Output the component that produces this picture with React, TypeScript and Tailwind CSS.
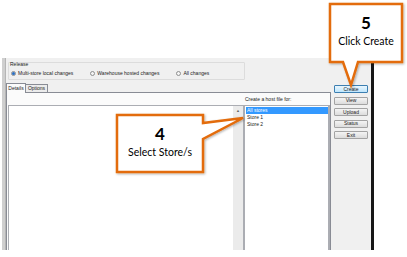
import React from "react";

const orange = "#e36c0a";

function Radio({ checked, label }: { checked?: boolean; label: string }) {
    return (
        <div className="flex items-center gap-[2px]">
            <span className="flex h-[5px] w-[5px] items-center justify-center rounded-full border border-[#8e8f8f] bg-[#f4f4f4]">
                {checked && <span className="h-[3px] w-[3px] rounded-full bg-[#2a6fc4]" />}
            </span>
            <span>{label}</span>
        </div>
    );
}

function Button({ label, primary }: { label: string; primary?: boolean }) {
    return (
        <div
            className={
                primary
                    ? "flex h-[8px] w-[34px] items-center justify-center rounded-[1px] border border-[#3c7fb1] bg-gradient-to-b from-[#eaf6fd] to-[#bee6fd] leading-none"
                    : "flex h-[8px] w-[34px] items-center justify-center rounded-[1px] border border-[#a3a3a3] bg-gradient-to-b from-[#f4f4f4] to-[#dcdcdc] leading-none"
            }
        >
            {label}
        </div>
    );
}

export default function App() {
    const buttons = ["Create", "View", "Upload", "Status", "Exit"];

    return (
        <div className="relative h-[257px] w-[407px] overflow-hidden bg-white text-[5px] text-[#222] [font-family:'Liberation_Sans',sans-serif]">
            <div className="pl-[2px] pt-[58px]">
                {/* Window */}
                <div className="flex h-[192px] w-[372px] border-l-[3px] border-r-[3px] border-l-[#cfcfcf] border-r-[#161616] bg-[#f0f0f0]">
                    {/* Left column */}
                    <div className="flex w-[326px] flex-col border-l border-[#b5b5b5]">
                        <div className="relative ml-[2px] mt-[4px] h-[18px] w-[237px] rounded-[1px] border border-[#dcdcdc]">
                            <span className="absolute left-[1px] top-[-1px] leading-none">Release</span>
                            <div className="flex gap-[17px] pl-[2px] pt-[8px] leading-none">
                                <Radio checked label="Multi-store local changes" />
                                <Radio label="Warehouse hosted changes" />
                                <Radio label="All changes" />
                            </div>
                        </div>

                        {/* Tabs */}
                        <div className="mt-[3px] flex items-end leading-none">
                            <div className="z-10 mb-[-1px] flex h-[10px] w-[20px] items-center justify-center border border-b-0 border-[#898c95] bg-[#fbfbfb]">
                                Details
                            </div>
                            <div className="flex h-[8px] w-[22px] items-center justify-center border border-l-0 border-b-0 border-[#898c95] bg-[#ececec]">
                                Options
                            </div>
                        </div>

                        {/* Tab page */}
                        <div className="flex flex-1 flex-col border border-b-0 border-[#898c95] bg-[#fbfbfb]">
                            <div className="flex h-[12px] items-center pl-[238px] leading-none">
                                Create a host file for:
                            </div>
                            <div className="flex flex-1">
                                <div className="ml-[1px] flex w-[236px] border border-b-0 border-[#abadb3] bg-white">
                                    <div className="flex-1" />
                                    <div className="flex w-[10px] flex-col items-center bg-[#ebebeb] pt-[3px]">
                                        <span className="text-[4px] leading-none text-[#666]">▲</span>
                                    </div>
                                </div>
                                <div className="flex flex-1 flex-col border border-b-0 border-r-[2px] border-[#abadb3] bg-white pl-[1px] pt-[1px] leading-[7px]">
                                    <div className="w-[82px] bg-[#3399ff] pl-[1px] text-white">All stores</div>
                                    <div className="pl-[1px]">Store 1</div>
                                    <div className="pl-[1px]">Store 2</div>
                                </div>
                            </div>
                        </div>
                    </div>

                    {/* Buttons */}
                    <div className="flex flex-col gap-[3.5px] pl-[3px] pt-[27px]">
                        {buttons.map((b) => (
                            <Button key={b} label={b} primary={b === "Create"} />
                        ))}
                    </div>
                </div>
            </div>

            {/* Callout shapes */}
            <svg className="absolute left-0 top-0" width="407" height="257" viewBox="0 0 407 257">
                <defs>
                    <filter id="sh" x="-20%" y="-20%" width="140%" height="140%">
                        <feDropShadow dx="1" dy="1" stdDeviation="0.8" floodColor="#000" floodOpacity="0.3" />
                    </filter>
                </defs>
                <polygon
                    points="330,4 402,4 402,62 358,62 351,85 343,62 330,62"
                    fill="#fff"
                    stroke={orange}
                    strokeWidth="2.5"
                    strokeLinejoin="miter"
                    filter="url(#sh)"
                />
                <polygon
                    points="117,115 203,115 203,123 243,118 203,139 203,172 117,172"
                    fill="#fff"
                    stroke={orange}
                    strokeWidth="2.5"
                    strokeLinejoin="miter"
                    filter="url(#sh)"
                />
            </svg>

            {/* Callout text */}
            <div className="absolute left-[330px] top-[5px] flex w-[72px] flex-col items-center text-black [font-family:Lato,sans-serif]">
                <span className="mt-[9px] text-[17px] font-bold leading-none">5</span>
                <span className="mt-[5px] text-[10.5px] leading-none">Click Create</span>
            </div>
            <div className="absolute left-[117px] top-[116px] flex w-[86px] flex-col items-center text-black [font-family:Lato,sans-serif]">
                <span className="mt-[9px] text-[17px] font-bold leading-none">4</span>
                <span className="mt-[5px] text-[10.5px] leading-none">Select Store/s</span>
            </div>
        </div>
    );
}
